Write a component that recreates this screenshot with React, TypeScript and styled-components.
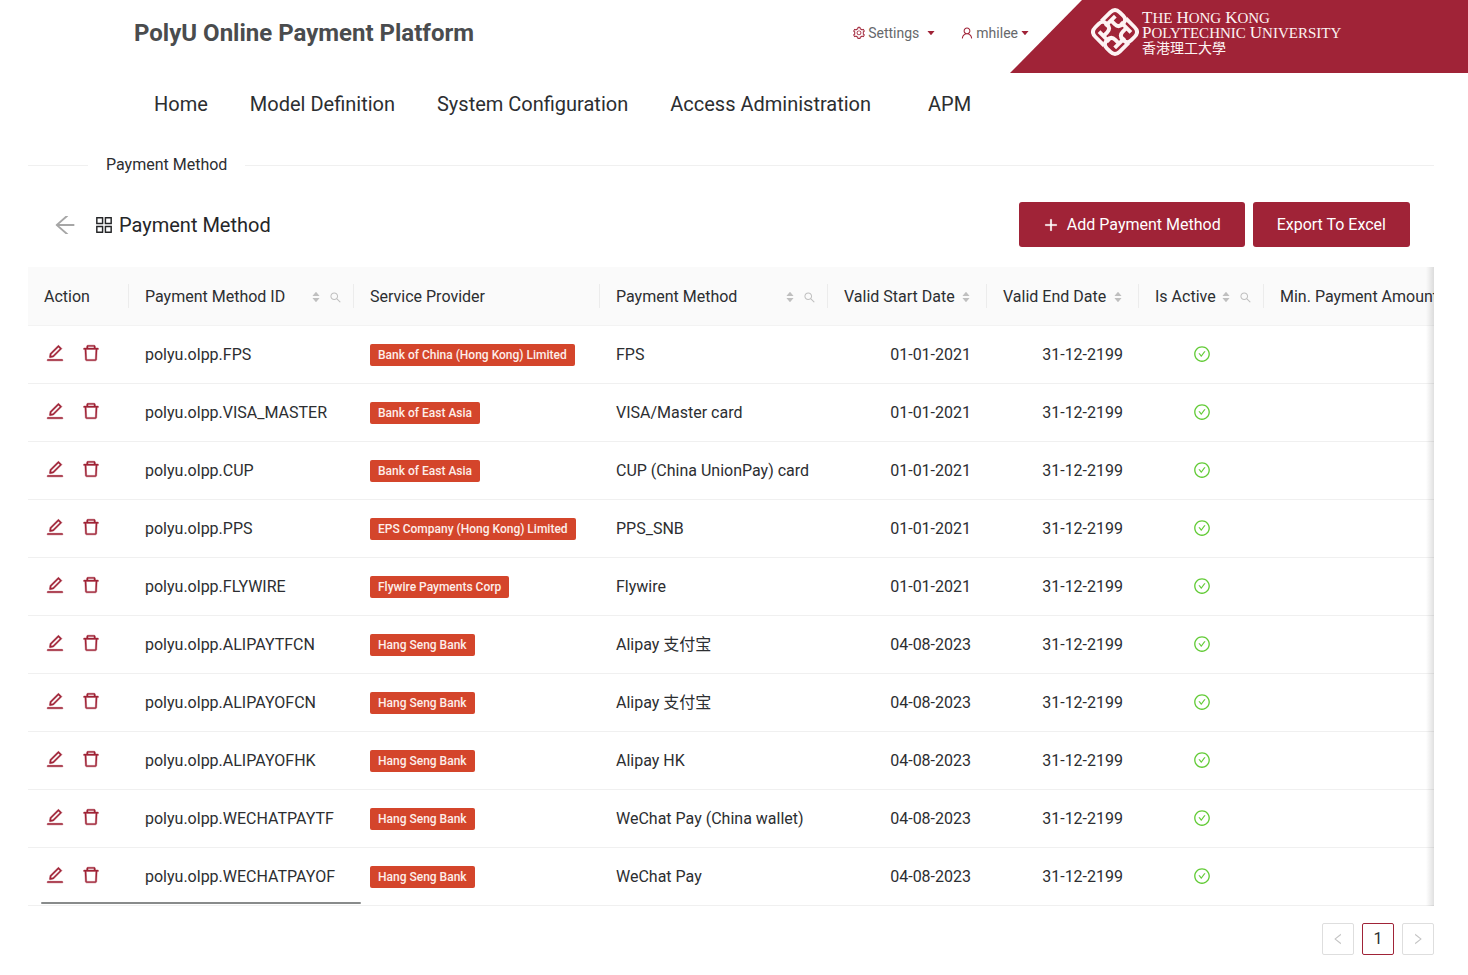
import React from "react";
import styled, { createGlobalStyle } from "styled-components";
import {
  AiOutlineSetting,
  AiOutlineUser,
  AiOutlineEdit,
  AiOutlineDelete,
  AiOutlineAppstore,
  AiOutlineArrowLeft,
  AiOutlinePlus,
  AiOutlineCheckCircle,
  AiOutlineLeft,
  AiOutlineRight,
  AiOutlineSearch,
  AiFillCaretDown,
  AiFillCaretUp,
} from "react-icons/ai";

const brand = "#a02337";
const ink = "#2c2e31";

const GlobalStyle = createGlobalStyle`
  *, *::before, *::after { box-sizing: border-box; }
  body {
    margin: 0;
    background: #fff;
    color: ${ink};
    font: 400 16px/24px Roboto, "Noto Sans CJK SC", sans-serif;
  }
  button { font: inherit; color: inherit; cursor: pointer; }
  a { color: inherit; text-decoration: none; }
`;

const Header = styled.header`
  display: flex;
  align-items: stretch;
  height: 73px;
`;

const SiteTitle = styled.h1`
  margin: 0 auto 0 134px;
  padding-top: 17px;
  font-size: 24px;
  line-height: 32px;
  font-weight: 700;
  color: #4a4c4e;
`;

const AccountMenu = styled.div`
  display: flex;
  align-items: flex-start;
  gap: 24px;
  padding-top: 21px;
`;

const MenuButton = styled.button<{ $gap: number }>`
  display: flex;
  align-items: center;
  gap: 2px;
  padding: 0;
  border: 0;
  background: none;
  font-size: 14px;
  line-height: 24px;
  color: #66686b;
  svg { color: ${brand}; }
  svg:last-child { margin-left: ${(p) => p.$gap}px; }
`;

const Banner = styled.div`
  display: flex;
  align-items: flex-start;
  gap: 3px;
  width: 31%;
  min-width: 458px;
  margin-left: -20px;
  padding: 7px 0 0 81px;
  background: ${brand};
  color: #fdf3f3;
  clip-path: polygon(72px 0, 100% 0, 100% 100%, 0 100%);
`;

const BannerText = styled.div`
  padding-top: 3px;
  font: 400 15px/15px "Liberation Serif", serif;
  text-transform: uppercase;
  white-space: nowrap;
`;

const BannerLine = styled.div`
  display: flex;
  gap: 4px;
  height: 15px;
`;

const Word = styled.span`
  &::first-letter { font-size: 17px; line-height: 15px; }
`;

const ChineseName = styled.div`
  font: 400 14px/14px "Noto Sans CJK TC", sans-serif;
`;

const Nav = styled.nav`
  display: flex;
  padding: 15px 0 0 133px;
`;

const NavLink = styled.a`
  padding: 0 21px;
  font-size: 20px;
  line-height: 32px;
  text-align: center;
  &:last-child { min-width: 115px; }
`;

const Main = styled.main`
  padding: 33px 34px 0 28px;
`;

const Divider = styled.div`
  display: flex;
  align-items: center;
  gap: 18px;
  &::before, &::after { content: ""; height: 1px; background: #f0f0f0; }
  &::before { width: 60px; }
  &::after { flex: 1; }
`;

const PageHead = styled.div`
  display: flex;
  align-items: center;
  gap: 8px;
  margin: 25px 24px 20px;
`;

const BackButton = styled.button`
  display: flex;
  padding: 0;
  border: 0;
  background: none;
  color: #a6a6a6;
`;

const PageTitle = styled.h2`
  display: flex;
  align-items: center;
  gap: 4px;
  margin: 0 auto 0 7px;
  font-size: 20px;
  line-height: 32px;
  font-weight: 400;
  color: #252628;
`;

const PrimaryButton = styled.button`
  display: flex;
  align-items: center;
  gap: 8px;
  height: 45px;
  padding: 0 24px;
  border: 0;
  border-radius: 3px;
  background: ${brand};
  color: #fff;
`;

const TableFrame = styled.div`
  position: relative;
  &::after {
    content: "";
    position: absolute;
    inset: 0 0 0 auto;
    width: 8px;
    background: linear-gradient(to right, transparent, rgba(0, 0, 0, 0.12));
    pointer-events: none;
  }
`;

const TableScroll = styled.div`
  overflow-x: auto;
  scrollbar-width: none;
`;

const ScrollThumb = styled.div`
  position: absolute;
  left: 13px;
  bottom: 2px;
  width: 320px;
  height: 2px;
  border-radius: 1px;
  background: #888b8b;
`;

const Table = styled.table`
  width: 100%;
  min-width: 1460px;
  table-layout: fixed;
  border-collapse: separate;
  border-spacing: 0;
`;

const Th = styled.th<{ $w?: number }>`
  position: relative;
  width: ${(p) => (p.$w ? p.$w + "px" : "auto")};
  height: 59px;
  padding: 2px 10px 0 16px;
  background: #fafafa;
  border-bottom: 1px solid #f3f3f3;
  font-weight: 400;
  text-align: left;
  white-space: nowrap;
  &:not(:last-child)::after {
    content: "";
    position: absolute;
    top: 17px;
    right: 0;
    width: 1px;
    height: 24px;
    background: #ececec;
  }
`;

const HeadCell = styled.div<{ $pad: number }>`
  display: flex;
  align-items: center;
  justify-content: space-between;
  padding-right: ${(p) => p.$pad}px;
`;

const HeadTools = styled.span`
  display: flex;
  align-items: center;
  gap: 8px;
`;

const IconButton = styled.button`
  display: flex;
  padding: 0;
  border: 0;
  background: none;
  color: #bfbfbf;
`;

const SortButton = styled(IconButton)`
  flex-direction: column;
  svg + svg { margin-top: -4px; }
`;

const Td = styled.td<{ $align?: string }>`
  height: 58px;
  padding: 0 16px;
  border-bottom: 1px solid #f0f0f0;
  text-align: ${(p) => p.$align || "left"};
  white-space: nowrap;
`;

const Actions = styled.div`
  display: flex;
  gap: 16px;
  padding: 0 0 4px 1px;
  button { color: ${brand}; }
  svg { stroke-width: 20; }
`;

const Tag = styled.span`
  display: inline-block;
  padding: 0 8px;
  border-radius: 2px;
  background: #d4452b;
  color: #fdeeea;
  font-size: 12px;
  font-weight: 500;
  line-height: 22px;
  vertical-align: middle;
`;

const Check = styled(AiOutlineCheckCircle)`
  display: block;
  margin: 0 auto 2px;
  color: #62cb36;
`;

const Pagination = styled.nav`
  display: flex;
  justify-content: flex-end;
  gap: 8px;
  margin: 17px 0 20px;
`;

const PageButton = styled.button<{ $active?: boolean }>`
  display: flex;
  align-items: center;
  justify-content: center;
  width: 32px;
  height: 32px;
  padding: 0;
  border: 1px solid ${(p) => (p.$active ? brand : "#dedede")};
  border-radius: 2px;
  background: #fff;
  color: ${(p) => (p.$active ? ink : "#c4c4c4")};
`;

function Knot() {
  return (
    <svg width="48" height="50" viewBox="-25 -25 50 50" fill="none" stroke="currentColor" strokeWidth="4" aria-hidden="true">
      <g transform="rotate(45)">
        {[0, 90, 180, 270].map((a) => (
          <path
            key={a}
            transform={`rotate(${a})`}
            d="M-18 2 V-11 Q-18 -18 -11 -18 H-6 Q0 -18 0 -12 Q0 -5.500 -6 -5.500 H-11.500 M-11.500 -12 V3"
          />
        ))}
      </g>
    </svg>
  );
}

function Sorter({ label }: { label: string }) {
  return (
    <SortButton aria-label={`Sort by ${label}`}>
      <AiFillCaretUp size={10} />
      <AiFillCaretDown size={10} />
    </SortButton>
  );
}

type Column = { label: string; width?: number; sort?: boolean; search?: boolean };

const columns: Column[] = [
  { label: "Action", width: 101 },
  { label: "Payment Method ID", width: 225, sort: true, search: true },
  { label: "Service Provider", width: 246 },
  { label: "Payment Method", width: 228, sort: true, search: true },
  { label: "Valid Start Date", width: 159, sort: true },
  { label: "Valid End Date", width: 152, sort: true },
  { label: "Is Active", width: 125, sort: true, search: true },
  { label: "Min. Payment Amount" },
];

const boc = "Bank of China (Hong Kong) Limited";
const bea = "Bank of East Asia";
const hsb = "Hang Seng Bank";

const rows = [
  ["FPS", boc, "FPS", "01-01-2021"],
  ["VISA_MASTER", bea, "VISA/Master card", "01-01-2021"],
  ["CUP", bea, "CUP (China UnionPay) card", "01-01-2021"],
  ["PPS", "EPS Company (Hong Kong) Limited", "PPS_SNB", "01-01-2021"],
  ["FLYWIRE", "Flywire Payments Corp", "Flywire", "01-01-2021"],
  ["ALIPAYTFCN", hsb, "Alipay 支付宝", "04-08-2023"],
  ["ALIPAYOFCN", hsb, "Alipay 支付宝", "04-08-2023"],
  ["ALIPAYOFHK", hsb, "Alipay HK", "04-08-2023"],
  ["WECHATPAYTF", hsb, "WeChat Pay (China wallet)", "04-08-2023"],
  ["WECHATPAYOF", hsb, "WeChat Pay", "04-08-2023"],
];

export default function App() {
  return (
    <>
      <GlobalStyle />
      <Header>
        <SiteTitle>PolyU Online Payment Platform</SiteTitle>
        <AccountMenu>
          <MenuButton $gap={5}>
            <AiOutlineSetting size={14} />
            Settings
            <AiFillCaretDown size={10} />
          </MenuButton>
          <MenuButton $gap={0}>
            <AiOutlineUser size={14} />
            mhilee
            <AiFillCaretDown size={10} />
          </MenuButton>
        </AccountMenu>
        <Banner>
          <Knot />
          <BannerText>
            <BannerLine><Word>The</Word> <Word>Hong</Word> <Word>Kong</Word></BannerLine>
            <BannerLine><Word>Polytechnic</Word> <Word>University</Word></BannerLine>
            <ChineseName lang="zh-Hant">香港理工大學</ChineseName>
          </BannerText>
        </Banner>
      </Header>
      <Nav>
        {["Home", "Model Definition", "System Configuration", "Access Administration", "APM"].map((n) => (
          <NavLink href="#" key={n}>{n}</NavLink>
        ))}
      </Nav>
      <Main>
        <Divider>Payment Method</Divider>
        <PageHead>
          <BackButton aria-label="Back"><AiOutlineArrowLeft size={26} /></BackButton>
          <PageTitle>
            <AiOutlineAppstore size={22} />
            Payment Method
          </PageTitle>
          <PrimaryButton>
            <AiOutlinePlus size={16} strokeWidth={40} />
            Add Payment Method
          </PrimaryButton>
          <PrimaryButton>Export To Excel</PrimaryButton>
        </PageHead>
        <TableFrame>
          <TableScroll>
            <Table>
              <thead>
                <tr>
                  {columns.map((c) => (
                    <Th key={c.label} $w={c.width}>
                      <HeadCell $pad={c.search ? 2 : 6}>
                        {c.label}
                        {c.sort && (
                          <HeadTools>
                            <Sorter label={c.label} />
                            {c.search && (
                              <IconButton aria-label={`Search ${c.label}`}>
                                <AiOutlineSearch size={13} />
                              </IconButton>
                            )}
                          </HeadTools>
                        )}
                      </HeadCell>
                    </Th>
                  ))}
                </tr>
              </thead>
              <tbody>
                {rows.map(([id, provider, method, start]) => (
                  <tr key={id}>
                    <Td>
                      <Actions>
                        <IconButton aria-label={`Edit ${id}`}><AiOutlineEdit size={20} /></IconButton>
                        <IconButton aria-label={`Delete ${id}`}><AiOutlineDelete size={20} /></IconButton>
                      </Actions>
                    </Td>
                    <Td>polyu.olpp.{id}</Td>
                    <Td><Tag>{provider}</Tag></Td>
                    <Td>{method}</Td>
                    <Td $align="right">{start}</Td>
                    <Td $align="right">31-12-2199</Td>
                    <Td><Check size={18} title="Active" /></Td>
                    <Td />
                  </tr>
                ))}
              </tbody>
            </Table>
          </TableScroll>
          <ScrollThumb />
        </TableFrame>
        <Pagination aria-label="Pages">
          <PageButton aria-label="Previous page"><AiOutlineLeft size={14} /></PageButton>
          <PageButton $active aria-current="page">1</PageButton>
          <PageButton aria-label="Next page"><AiOutlineRight size={14} /></PageButton>
        </Pagination>
      </Main>
    </>
  );
}
